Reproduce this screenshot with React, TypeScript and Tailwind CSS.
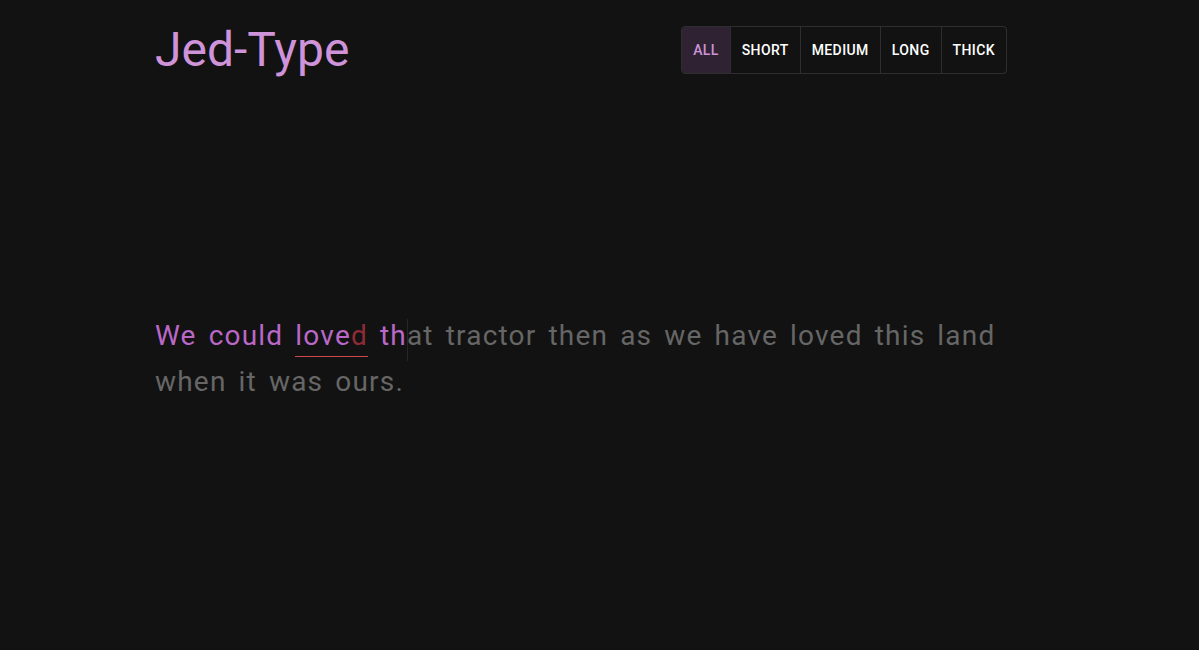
import React from "react";

const words = "We could loved that tractor then as we have loved this land when it was ours.".split(" ");

export default function App() {
  const btns = ["ALL", "SHORT", "MEDIUM", "LONG", "THICK"];
  return (
    <div className="min-h-[650px] w-full bg-[#121212]" style={{ fontFamily: "Roboto, 'Noto Sans', sans-serif" }}>
      <div className="ml-[155px] w-[852px] pt-[22px]">
        <div className="flex items-center justify-between">
          <h1 className="text-[48px] leading-[56px] font-normal text-[#ce93d8]">Jed-Type</h1>
          <div className="flex rounded-[4px] border border-[#ffffff1f] h-[48px]">
            {btns.map((b, i) => (
              <div
                key={b}
                className={
                  "flex items-center px-[11px] text-[14px] font-medium tracking-[0.4px] " +
                  (i > 0 ? "border-l border-[#ffffff1f] " : "") +
                  (i === 0 ? "bg-[#2f2333] text-[#ce93d8] rounded-l-[3px]" : "text-white")
                }
              >
                {b}
              </div>
            ))}
          </div>
        </div>
        <div className="mt-[235px] flex flex-wrap gap-x-[12px] text-[28px] leading-[46px] tracking-[1.2px] text-[#666666]">
          {words.map((w, i) => {
            if (i < 2) return <span key={i} className="text-[#ba68c8]">{w}</span>;
            if (i === 2)
              return (
                <span key={i} className="relative">
                  <span className="text-[#ba68c8]">love</span>
                  <span className="text-[#8e2b36]">d</span>
                  <span className="absolute left-0 right-0 top-[43px] h-[1px] bg-[#d0464e]" />
                </span>
              );
            if (i === 3)
              return (
                <span key={i} className="relative">
                  <span className="text-[#ba68c8]">th</span>
                  <span className="relative">
                    <span className="absolute left-0 top-[0px] h-[42px] w-[1px] bg-[#262626]" />
                    at
                  </span>
                </span>
              );
            return <span key={i}>{w}</span>;
          })}
        </div>
      </div>
    </div>
  );
}
